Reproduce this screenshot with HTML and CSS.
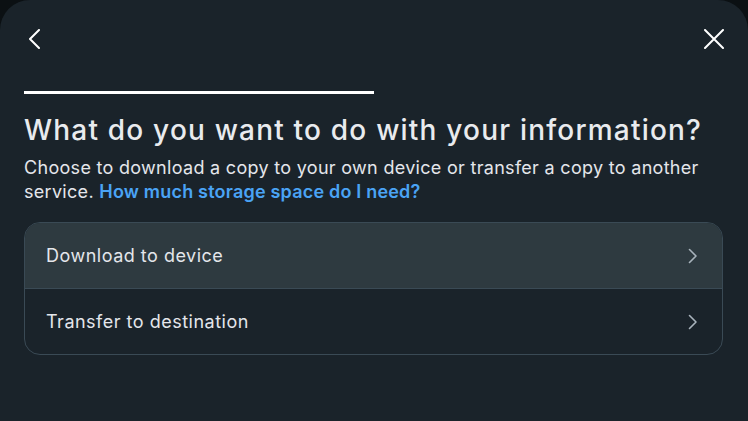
FILE: index.html
```html
<!DOCTYPE html>
<html>
<head>
<meta charset="utf-8">
<link rel="stylesheet" href="styles.css">
</head>
<body>
<div class="panel">
  <div class="topbar">
    <button class="icon-btn back" aria-label="Back">
      <svg width="12" height="20" viewBox="0 0 12 20"><path d="M11 1 L2 10 L11 19" fill="none" stroke="#fff" stroke-width="2" stroke-linecap="round" stroke-linejoin="round"/></svg>
    </button>
    <button class="icon-btn close" aria-label="Close">
      <svg width="20" height="20" viewBox="0 0 20 20"><path d="M1 1 L19 19 M19 1 L1 19" fill="none" stroke="#fff" stroke-width="2" stroke-linecap="round"/></svg>
    </button>
  </div>
  <div class="progress"><div class="progress-fill"></div></div>
  <h1 class="title">What do you want to do with your information?</h1>
  <p class="desc">Choose to download a copy to your own device or transfer a copy to another service. <a class="link" href="#">How much storage space do I need?</a></p>
  <div class="card">
    <div class="row active">
      <span class="row-label">Download to device</span>
      <svg class="chev" width="10" height="16" viewBox="0 0 10 16"><path d="M1.5 1.5 L8 8 L1.5 14.5" fill="none" stroke="#a8b3bc" stroke-width="1.6" stroke-linecap="round" stroke-linejoin="round"/></svg>
    </div>
    <div class="row">
      <span class="row-label">Transfer to destination</span>
      <svg class="chev" width="10" height="16" viewBox="0 0 10 16"><path d="M1.5 1.5 L8 8 L1.5 14.5" fill="none" stroke="#a8b3bc" stroke-width="1.6" stroke-linecap="round" stroke-linejoin="round"/></svg>
    </div>
  </div>
</div>
</body>
</html>
```
FILE: styles.css
```css
html, body {
  margin: 0;
  padding: 0;
  background: #0b1013;
  height: 100%;
}
body {
  font-family: "Inter", "Noto Sans", sans-serif;
  color: #e4e6eb;
}
.panel {
  background: #1a232a;
  height: 421px;
  border-radius: 30px 30px 0 0;
  padding: 0 24px;
  box-sizing: border-box;
  overflow: hidden;
}
.topbar {
  display: flex;
  justify-content: space-between;
  align-items: center;
  padding-top: 29px;
  height: 20px;
}
.icon-btn {
  background: none;
  border: 0;
  padding: 0;
  display: flex;
  cursor: pointer;
}
.back { margin-left: 4px; }
.close { margin-right: 0; }
.progress {
  margin-top: 42px;
  height: 3px;
}
.progress-fill {
  width: 350px;
  height: 3px;
  background: #fff;
}
.title {
  margin: 18px 0 0;
  font-size: 28px;
  font-weight: 500;
  line-height: 36px;
  color: #e9ebee;
  letter-spacing: 1.2px;
  white-space: nowrap;
}
.desc {
  margin: 8px 0 0;
  font-size: 18px;
  line-height: 24px;
  color: #e4e6eb;
  letter-spacing: 0.3px;
}
.link {
  color: #4aa3f5;
  font-weight: 600;
  text-decoration: none;
  letter-spacing: 0.2px;
}
.card {
  margin-top: 18px;
  border: 1px solid #3a4a55;
  border-radius: 16px;
  overflow: hidden;
  width: 699px;
  box-sizing: border-box;
}
.row {
  display: flex;
  align-items: center;
  justify-content: space-between;
  height: 65px;
  padding: 0 24px 0 21px;
}
.row.active {
  background: #2e3a40;
  border-bottom: 1px solid #3a4a55;
}
.row-label {
  font-size: 18px;
  color: #e4e6eb;
  letter-spacing: 0.5px;
}
.chev { display: block; }
```
